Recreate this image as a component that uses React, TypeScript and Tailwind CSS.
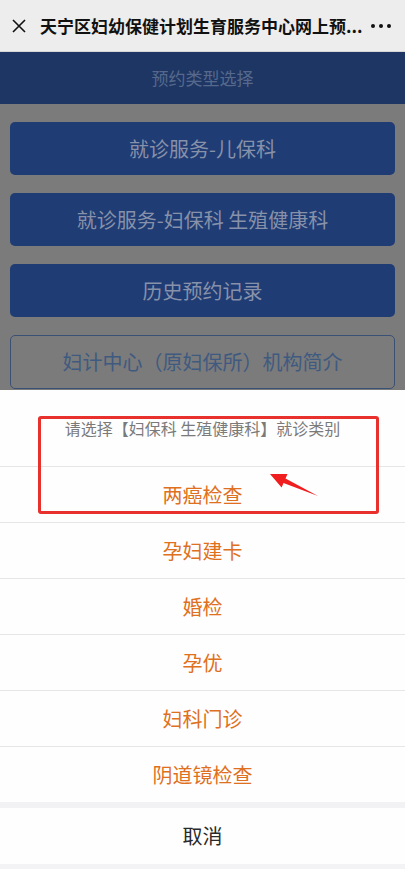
import React from 'react';

const font = { fontFamily: '"Noto Sans CJK SC", "Noto Sans", sans-serif' };

const options = ['两癌检查', '孕妇建卡', '婚检', '孕优', '妇科门诊', '阴道镜检查'];

function NavBar() {
  return (
    <div className="flex h-[52px] items-center bg-[#ededed] border-b border-[#d6d6d6] pl-[11px] pr-[14px]">
      <svg width="16" height="16" viewBox="0 0 16 16" className="shrink-0">
        <path d="M2 2 L14 14 M14 2 L2 14" stroke="#111" strokeWidth="1.6" fill="none" />
      </svg>
      <div className="ml-[13px] flex-1 whitespace-nowrap text-[17px] font-bold text-[#111]">
        天宁区妇幼保健计划生育服务中心网上预...
      </div>
      <div className="flex items-center gap-[4px]">
        <span className="h-[4px] w-[4px] rounded-full bg-[#111]" />
        <span className="h-[4px] w-[4px] rounded-full bg-[#111]" />
        <span className="h-[4px] w-[4px] rounded-full bg-[#111]" />
      </div>
    </div>
  );
}

function PageBehind() {
  return (
    <div className="flex flex-1 flex-col bg-[#7b7b7b]">
      <div className="flex h-[52px] items-center justify-center bg-[#1e3663] text-[17px] text-[#56698c]">
        预约类型选择
      </div>
      <div className="flex flex-col gap-[18px] px-[10px] pt-[18px]">
        <div className="flex h-[53px] items-center justify-center rounded-[5px] bg-[#1f3c74] text-[20px] text-[#8791a9]">
          就诊服务-儿保科
        </div>
        <div className="flex h-[53px] items-center justify-center rounded-[5px] bg-[#1f3c74] text-[20px] text-[#8791a9]">
          就诊服务-妇保科 生殖健康科
        </div>
        <div className="flex h-[53px] items-center justify-center rounded-[5px] bg-[#1f3c74] text-[20px] text-[#8791a9]">
          历史预约记录
        </div>
        <div className="flex h-[54px] items-center justify-center rounded-[5px] border border-[#3a5176] text-[20px] text-[#3f5a80]">
          妇计中心（原妇保所）机构简介
        </div>
      </div>
    </div>
  );
}

function ActionSheet() {
  return (
    <div className="absolute bottom-0 left-0 right-0 flex flex-col bg-[#f2f2f4]">
      <div className="flex h-[76px] items-center justify-center bg-[#fefefe] text-[16px] text-[#7a7a7a]">
        请选择【妇保科 生殖健康科】就诊类别
      </div>
      {options.map((o) => (
        <div
          key={o}
          className="flex h-[56px] items-center justify-center border-t border-[#e6e6e6] bg-[#fefefe] text-[20px] text-[#df7020]"
        >
          {o}
        </div>
      ))}
      <div className="mt-[6px] flex h-[56px] items-center justify-center bg-[#fefefe] text-[20px] text-[#2a2a2a]">
        取消
      </div>
      <div className="h-[5px] bg-[#f3f3f5]" />
    </div>
  );
}

export default function App() {
  return (
    <div className="relative flex h-[869px] w-[405px] flex-col overflow-hidden bg-white" style={font}>
      <NavBar />
      <PageBehind />
      <ActionSheet />
      {/* annotation */}
      <div className="absolute left-[38px] top-[416px] h-[98px] w-[341px] rounded-[3px] border-[3px] border-[#e8302c]" />
      <svg className="pointer-events-none absolute inset-0" width="405" height="869" viewBox="0 0 405 869">
        <polygon points="270,474 287.5,474 285.5,478.4 318,496 283.5,483 281.6,487.5" fill="#f01e1e" />
      </svg>
    </div>
  );
}
